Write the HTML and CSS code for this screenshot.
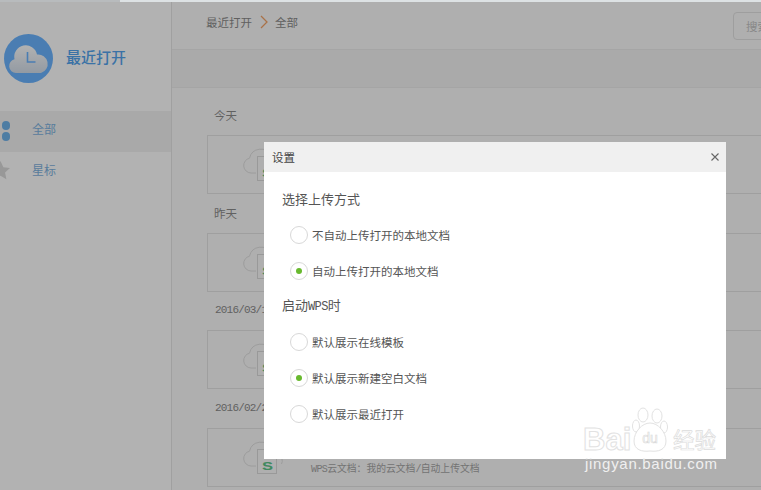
FILE: index.html
```html
<!DOCTYPE html>
<html lang="zh">
<head>
<meta charset="utf-8">
<title>设置</title>
<link rel="stylesheet" href="styles.css">
</head>
<body>
<svg class="defs" width="0" height="0" aria-hidden="true">
  <symbol id="file" viewBox="0 0 42 34">
    <path class="cloud" d="M14 26H9a7.500 7.500 0 0 1-1.500-14.800A11.500 11.500 0 0 1 29 8.500a8 8 0 0 1 7.500 6.500A6.500 6.500 0 0 1 39.500 24"/>
    <rect class="doc" x="15.500" y="9.500" width="19" height="24"/>
    <text class="s" x="20" y="29.500" textLength="11" lengthAdjust="spacingAndGlyphs">S</text>
  </symbol>
</svg>
<div class="top-strip"></div>
<div class="app">
  <aside class="side">
    <div class="brand">
      <svg class="logo" viewBox="0 0 49 49" aria-hidden="true">
        <defs>
          <linearGradient id="cl" x1="0" y1="0" x2="0" y2="1">
            <stop offset="0" stop-color="#ffffff"/>
            <stop offset="1" stop-color="#d3dde9"/>
          </linearGradient>
        </defs>
        <circle cx="24.500" cy="24.500" r="24.500" fill="#6ab4ff"/>
        <path fill="url(#cl)" d="M12 39a7 7 0 0 1-1.500-13.800A11 11 0 0 1 33 20.500a9.500 9.500 0 0 1 4 18.500Z"/>
        <path class="logo-l" d="M23.500 18v10h8"/>
      </svg>
      <span class="brand-name">最近打开</span>
    </div>
    <nav class="nav">
      <a class="nav-item active">
        <span class="dots"><i></i><i></i></span>
        <span>全部</span>
      </a>
      <a class="nav-item">
        <svg class="star" viewBox="0 0 20 20" aria-hidden="true"><path d="M10 0l3 6.500 7 .8-5.200 4.800 1.400 7L10 15.500 3.800 19l1.400-7L0 7.300l7-.8z"/></svg>
        <span>星标</span>
      </a>
    </nav>
  </aside>
  <main class="main">
    <header class="crumbs">
      <span>最近打开</span>
      <svg class="chev" viewBox="0 0 8 14" aria-hidden="true"><path d="M1 1l6 6-6 6"/></svg>
      <span>全部</span>
      <div class="search">搜索</div>
    </header>
    <div class="band"></div>
    <div class="list">
      <section class="group">
        <div class="label">今天</div>
        <div class="card"><svg class="file"><use href="#file"/></svg></div>
      </section>
      <section class="group">
        <div class="label">昨天</div>
        <div class="card"><svg class="file"><use href="#file"/></svg></div>
      </section>
      <section class="group">
        <div class="label num">2016/03/18</div>
        <div class="card"><svg class="file"><use href="#file"/></svg></div>
      </section>
      <section class="group">
        <div class="label num">2016/02/26</div>
        <div class="card">
          <svg class="file"><use href="#file"/></svg>
          <div class="path"><span class="mono">WPS</span>云文档：我的云文档<span class="mono">/</span>自动上传文档</div>
        </div>
      </section>
    </div>
  </main>
</div>
<div class="overlay"></div>
<div class="dialog">
  <div class="dialog-head">
    <span>设置</span>
    <svg class="close" viewBox="0 0 8 8" aria-hidden="true"><path d="M.5.500l7 7M7.500.500l-7 7"/></svg>
  </div>
  <div class="dialog-body">
    <h3 class="q">选择上传方式</h3>
    <div class="opt"><span class="radio"></span>不自动上传打开的本地文档</div>
    <div class="opt"><span class="radio on"></span>自动上传打开的本地文档</div>
    <h3 class="q q2">启动<span class="mono-q">WPS</span>时</h3>
    <div class="opt"><span class="radio"></span>默认展示在线模板</div>
    <div class="opt"><span class="radio on"></span>默认展示新建空白文档</div>
    <div class="opt"><span class="radio"></span>默认展示最近打开</div>
  </div>
</div>
<div class="mark">
  <div class="mark-top">
    <span class="mark-bai">Bai</span>
    <svg class="paw" viewBox="0 0 36 47" aria-hidden="true">
      <ellipse cx="11" cy="9" rx="5" ry="7"/>
      <ellipse cx="25" cy="10" rx="5" ry="7"/>
      <ellipse cx="32" cy="21" rx="3.500" ry="6"/>
      <ellipse cx="4" cy="20" rx="3.500" ry="6"/>
      <path d="M18 17c8 0 16 9 16 18 0 9-8 11-16 10-8 1-16-1-16-10 0-9 8-18 16-18z"/>
      <text class="paw-du" x="18" y="37" text-anchor="middle">du</text>
    </svg>
    <span class="mark-cn">经验</span>
  </div>
  <div class="mark-url">jingyan.baidu.com</div>
</div>
</body>
</html>
```
FILE: styles.css
```css
* { box-sizing: border-box; }
html, body { margin: 0; height: 100%; }
body {
  position: relative;
  width: 761px;
  height: 490px;
  overflow: hidden;
  background: #fbfbfb;
  font-family: "Noto Sans CJK SC", "Noto Sans", sans-serif;
  font-size: 11.5px;
}
.defs { position: absolute; }
.top-strip {
  position: relative;
  z-index: 2;
  height: 2px;
  background: linear-gradient(90deg, #b8bbbd 120px, #dde2e4 120px);
}
.app { display: flex; height: 488px; }
.side {
  flex: 0 0 172px;
  border-right: 1px solid #e6e6e6;
  background: #fff;
}
.brand {
  display: flex;
  align-items: flex-start;
  gap: 13px;
  padding: 32px 0 0 4px;
  height: 109px;
}
.logo { width: 49px; height: 49px; flex: none; }
.logo-l { fill: none; stroke: #6ab4ff; stroke-width: 1.600; }
.brand-name {
  font-size: 15px;
  line-height: 45px;
  color: #54a4ee;
  font-weight: 500;
}
.nav-item {
  display: flex;
  align-items: center;
  height: 41px;
  padding: 0 0 6px 32px;
  position: relative;
  color: #7fb3e0;
  font-size: 12px;
}
.nav-item.active { background: #f2f2f2; }
.dots {
  position: absolute;
  left: 1.500px;
  top: 10px;
  display: flex;
  flex-direction: column;
  gap: 2.500px;
}
.dots i {
  display: block;
  width: 8.500px;
  height: 8.500px;
  border-radius: 50%;
  background: #70b3ea;
}
.star {
  position: absolute;
  left: -9px;
  top: 9px;
  width: 19px;
  height: 19px;
}
.star path { fill: #dadada; }
.main { flex: 1; min-width: 0; overflow: hidden; }
.crumbs {
  position: relative;
  display: flex;
  align-items: center;
  gap: 7px;
  height: 47px;
  padding: 0 0 8px 34px;
  color: #8a8a8a;
}
.chev { width: 8px; height: 14px; margin-left: 1px; }
.chev path { fill: none; stroke: #f2a468; stroke-width: 1.300; }
.search {
  position: absolute;
  left: 561px;
  top: 10px;
  width: 120px;
  height: 28px;
  padding: 0 12px;
  line-height: 26px;
  border: 1px solid #e2e2e2;
  border-radius: 4px;
  color: #c4c4c4;
}
.band {
  height: 39px;
  background: #f4f4f4;
  border-top: 1px solid #ececec;
  border-bottom: 1px solid #ececec;
}
.list { padding: 18px 0 0 35px; }
.group { margin-bottom: 9.500px; }
.label {
  height: 20px;
  line-height: 18px;
  padding-left: 7px;
  margin-bottom: 9px;
  color: #8c8c8c;
}
.label.num {
  padding-left: 8px;
  font-family: "Liberation Mono", monospace;
  font-size: 11px;
  letter-spacing: -.8px;
  white-space: nowrap;
}
.card {
  position: relative;
  width: 700px;
  height: 59px;
  border: 1px solid #e4e4e4;
}
.file {
  position: absolute;
  left: 34px;
  top: 11px;
  width: 42px;
  height: 34px;
}
.cloud { fill: none; stroke: #e0e0e0; stroke-width: 1; }
.doc { fill: #fbfbfb; stroke: #dcdcdc; stroke-width: 1; }
.s { font: 700 10px "Liberation Sans", sans-serif; fill: #5cc488; }
.path {
  position: absolute;
  left: 103px;
  top: 31px;
  font-size: 9.800px;
  line-height: 16px;
  color: #a6a6a6;
}
.mono {
  font-family: "Liberation Mono", monospace;
  font-size: 10px;
  letter-spacing: -.6px;
}
.mono-q {
  font-family: "Liberation Mono", monospace;
  font-size: 12px;
  letter-spacing: -.6px;
}
.overlay {
  position: absolute;
  inset: 0;
  background: rgba(0, 0, 0, .3);
}
.dialog {
  position: absolute;
  left: 264px;
  top: 142px;
  width: 462px;
  height: 317px;
  background: #fff;
  color: #555;
}
.dialog-head {
  display: flex;
  align-items: center;
  justify-content: space-between;
  height: 30px;
  padding: 0 7px 0 8px;
  background: #f0f0f0;
  color: #444;
}
.close { width: 8px; height: 8px; }
.close path { fill: none; stroke: #666; stroke-width: 1.100; }
.dialog-body { padding: 17px 18px 0; }
.q {
  margin: 0;
  font-size: 13px;
  font-weight: 400;
  line-height: 20px;
  color: #555;
}
.q2 { margin-top: 6px; }
.opt {
  display: flex;
  align-items: center;
  gap: 4px;
  height: 36px;
  padding-left: 8px;
  color: #555;
}
.q + .opt { margin-top: 8px; }
.q2 + .opt { margin-top: 7px; }
.radio {
  position: relative;
  width: 18px;
  height: 18px;
  flex: none;
  border: 1px solid #d8d8d8;
  border-radius: 50%;
  background: #fff;
}
.radio.on::after {
  content: "";
  position: absolute;
  left: 5px;
  top: 5px;
  width: 6px;
  height: 6px;
  border-radius: 50%;
  background: #68b92e;
}
.mark {
  position: absolute;
  left: 583px;
  top: 406px;
  width: 140px;
}
.mark-top { display: flex; align-items: flex-end; height: 47px; }
.mark-bai {
  flex: 0 0 49px;
  font: 700 31px/32px "Liberation Sans", sans-serif;
  color: #fff;
  -webkit-text-stroke: 1px #e2e2e2;
  margin-bottom: -3px;
}
.paw { width: 36px; height: 47px; flex: none; }
.paw ellipse, .paw path { fill: #fff; stroke: #e2e2e2; stroke-width: 1; }
.paw-du {
  font: 400 14px "Liberation Sans", sans-serif;
  fill: #fff;
  stroke: #d8d8d8;
  stroke-width: .6;
}
.mark-cn {
  font-size: 21.500px;
  line-height: 28px;
  margin-left: 5px;
  color: #fff;
  -webkit-text-stroke: .7px #dcdcdc;
}
.mark-url {
  font: 400 15px/18px "Liberation Sans", sans-serif;
  letter-spacing: .700px;
  color: #f0f0f0;
  margin: 2px 0 0 2px;
}
```
